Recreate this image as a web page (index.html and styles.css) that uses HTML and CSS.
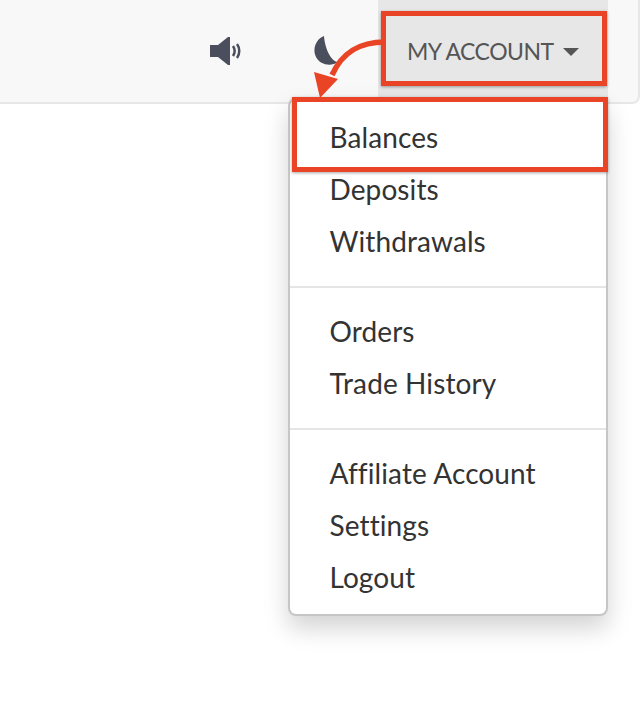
FILE: index.html
```html
<!DOCTYPE html>
<html lang="en">
  <head>
    <meta charset="UTF-8" />
    <title>My Account</title>
    <link rel="stylesheet" href="styles.css">
  </head>
  <body>
    <nav class="navbar">
      <button class="nav-icon sound-icon" aria-label="Sound">
        <svg width="32" height="30" viewBox="0 0 32 30">
          <path d="M1 9h8l10-8h2v28h-2L9 21H1z" fill="#4b4e5c" />
          <path d="M24 10c2 3 2 7 0 10" class="sound-wave" />
          <path d="M28 8c3 4 3 10 0 14" class="sound-wave" />
        </svg>
      </button>
      <button class="nav-icon moon-icon" aria-label="Night mode">
        <svg width="28" height="32" viewBox="0 0 28 32">
          <path d="M11 1C3 4-1 14 3 22c4 8 15 10 22 5C19 27 12 15 11 1z" fill="#4b4e5c" />
        </svg>
      </button>
      <button class="account-toggle"><span class="account-label">MY ACCOUNT</span><span class="caret"></span></button>
    </nav>

    <div class="dropdown-menu">
      <a href="#">Balances</a>
      <a href="#">Deposits</a>
      <a href="#">Withdrawals</a>
      <div class="divider"></div>
      <a href="#">Orders</a>
      <a href="#">Trade History</a>
      <div class="divider"></div>
      <a href="#">Affiliate Account</a>
      <a href="#">Settings</a>
      <a href="#">Logout</a>
    </div>

    <!-- red annotations on top of the screenshot -->
    <div class="mark mark-account"></div>
    <div class="mark mark-balances"></div>
    <svg class="mark-arrow" width="90" height="70" viewBox="0 0 90 70">
      <path d="M78 13C54 13 36 22 25 46" fill="none" stroke="#e94425" stroke-width="5.5" />
      <path d="M7 43l24 7L13 69z" fill="#e94425" />
    </svg>
  </body>
</html>
```

FILE: styles.css
```css
* {
  box-sizing: border-box;
  font-family: "Lato", sans-serif;
  margin: 0;
  padding: 0;
}

body {
  background-color: #fff;
  height: 716px;
  overflow: hidden;
}

.navbar {
  display: flex;
  justify-content: flex-end;
  width: 640px;
  height: 104px;
  padding-right: 30px;
  background-color: #f8f8f8;
  border-bottom: 2px solid #e7e7e7;
  border-right: 2px solid #e7e7e7;
  border-bottom-right-radius: 8px;
}

.nav-icon {
  display: flex;
  align-items: center;
  background: none;
  border: none;
}

.sound-icon {
  margin-right: 72px;
}

.sound-wave {
  fill: none;
  stroke: #4b4e5c;
  stroke-width: 2.5;
}

.moon-icon {
  margin-right: 37px;
}

.account-toggle {
  display: flex;
  align-items: center;
  width: 230px;
  height: 102px;
  padding-left: 29px;
  background-color: #e7e7e7;
  border: none;
  color: #555;
  font-size: 23px;
  letter-spacing: -0.5px;
}

.caret {
  margin-left: 9px;
  margin-top: 2px;
  border-top: 8px solid #555;
  border-left: 8px solid transparent;
  border-right: 8px solid transparent;
}

.dropdown-menu {
  position: absolute;
  top: 98px;
  left: 288px;
  width: 320px;
  height: 518px;
  padding: 11px 0;
  background-color: #fff;
  border: 2px solid #c6c6c6;
  border-top-color: #d8d8d8;
  border-radius: 8px;
  box-shadow: 0 12px 24px rgba(0, 0, 0, 0.175);
}

.dropdown-menu a {
  display: block;
  height: 52px;
  padding-left: 39.5px;
  color: #333;
  font-size: 28px;
  letter-spacing: 0.1px;
  line-height: 52px;
  text-decoration: none;
}

.divider {
  height: 2px;
  margin: 19px 0 17px;
  background-color: #e5e5e5;
}

.mark {
  position: absolute;
  border: 5px solid #e94425;
  box-shadow: 0 1px 3px rgba(0, 0, 0, 0.35);
}

.mark-account {
  top: 11px;
  left: 381px;
  width: 226px;
  height: 75px;
}

.mark-balances {
  top: 97px;
  left: 292px;
  width: 316px;
  height: 75px;
}

.mark-arrow {
  position: absolute;
  top: 29px;
  left: 307px;
}
```
